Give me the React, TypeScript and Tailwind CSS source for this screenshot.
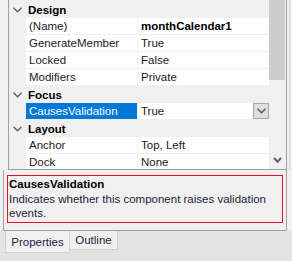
import React from 'react';

type Row =
  | {kind: 'cat'; label: string}
  | {kind: 'prop'; name: string; value: string; bold?: boolean; selected?: boolean};

const rows: Row[] = [
  {kind: 'cat', label: 'Design'},
  {kind: 'prop', name: '(Name)', value: 'monthCalendar1', bold: true},
  {kind: 'prop', name: 'GenerateMember', value: 'True'},
  {kind: 'prop', name: 'Locked', value: 'False'},
  {kind: 'prop', name: 'Modifiers', value: 'Private'},
  {kind: 'cat', label: 'Focus'},
  {kind: 'prop', name: 'CausesValidation', value: 'True', selected: true},
  {kind: 'cat', label: 'Layout'},
  {kind: 'prop', name: 'Anchor', value: 'Top, Left'},
  {kind: 'prop', name: 'Dock', value: 'None'},
];

const Chevron = ({className = ''}: {className?: string}) => (
  <svg width="9" height="6" viewBox="0 0 9 6" className={className}>
    <polyline points="0.5,0.8 4.5,4.8 8.5,0.8" fill="none" stroke="currentColor" strokeWidth="1.3"/>
  </svg>
);

const PropRow = ({row}: {row: Row}) => {
  if (row.kind === 'cat') {
    return (
      <div className="flex h-[17px] items-center">
        <div className="w-[16px] flex justify-center text-[#606060]">
          <Chevron/>
        </div>
        <div className="pl-[3px] font-bold text-black">{row.label}</div>
      </div>
    );
  }
  return (
    <div className="flex h-[16px] mb-px gap-px">
      <div className="w-[16px]"/>
      <div
        className={
          row.selected
            ? 'w-[111px] bg-[#0078d7] text-white pl-[3px] flex items-center'
            : 'w-[111px] bg-white text-[#1a1a1a] pl-[3px] flex items-center'
        }
      >
        {row.name}
      </div>
      <div className="flex-1 bg-white flex items-center justify-between pl-[3px]">
        <span className={row.bold ? 'font-bold text-black' : 'text-[#1a1a1a]'}>{row.value}</span>
        {row.selected && (
          <div className="w-[16px] h-[16px] bg-[#dedede] border border-[#a6a6a6] flex items-center justify-center text-[#555]">
            <Chevron/>
          </div>
        )}
      </div>
    </div>
  );
};

export default function App() {
  return (
    <div className="w-[292px] h-[261px] bg-[#f0f0f0] overflow-hidden text-[11.5px] leading-[14px] font-['Liberation_Sans',Arial,sans-serif]">
      {/* grid */}
      <div className="flex">
        <div className="ml-[8px] w-[279px] h-[170px] border-l border-r border-b border-[#a0a0a0] flex">
          <div className="w-[260px] pt-px overflow-hidden">
            {rows.map((r, i) => (
              <PropRow key={i} row={r}/>
            ))}
          </div>
          <div className="w-[17px] bg-[#f0f0f0] flex flex-col">
            <div className="w-[16px] h-[80px] bg-[#cdcdcd]"/>
            <div className="flex-1"/>
            <div className="h-[18px] flex justify-center items-center pr-px text-[#606060]">
              <svg width="9" height="7" viewBox="0 0 9 7">
                <polyline points="1,1 4.5,4.8 8,1" fill="none" stroke="currentColor" strokeWidth="2"/>
              </svg>
            </div>
          </div>
        </div>
        <div className="ml-[2px] w-px h-[170px] bg-[#d4d4d4]"/>
      </div>

      {/* description */}
      <div className="ml-[3px] w-[284px] h-[61px] border-l border-r border-b border-[#a0a0a0] pt-[5px] pl-[3px]">
        <div className="w-[276px] h-[48px] border border-[#e81123] px-[1px] pt-px text-[#1e1e3c]">
          <div className="font-bold text-black">CausesValidation</div>
          <div className="mt-px leading-[14px]">
            Indicates whether this component raises validation events.
          </div>
        </div>
      </div>

      {/* tabs */}
      <div className="flex pl-[5px] bg-[#e3e3e3] h-[30px] items-start">
        <div className="w-[65px] h-[22px] bg-[#f0f0f0] border-l border-r border-b border-[#d0d0d0] flex items-center justify-center text-[#1e1e3c]">
          Properties
        </div>
        <div className="w-[48px] h-[19px] bg-[#f0f0f0] border-r border-b border-[#d0d0d0] flex items-center justify-center text-[#1e1e3c]">
          Outline
        </div>
      </div>
    </div>
  );
}
